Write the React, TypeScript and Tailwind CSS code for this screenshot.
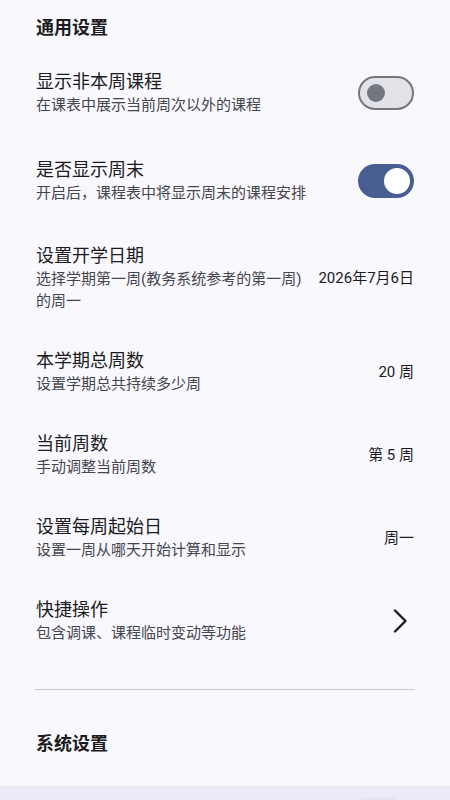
const font = "font-['Roboto','Noto_Sans_CJK_SC',sans-serif]"

function Toggle({ on }: { on: boolean }) {
  if (on) {
    return (
      <div className="flex h-[34px] w-[56px] shrink-0 items-center justify-end rounded-full bg-[#485d92] pr-[4px]">
        <div className="h-[26px] w-[26px] rounded-full bg-white" />
      </div>
    )
  }
  return (
    <div className="flex h-[34px] w-[56px] shrink-0 items-center rounded-full border-2 border-[#74777f] bg-[#e2e2e9] pl-[7px]">
      <div className="h-[18px] w-[18px] rounded-full bg-[#74777f]" />
    </div>
  )
}

function Chevron() {
  return (
    <svg width="16" height="24" viewBox="0 0 16 24" fill="none" className="mr-[6px] shrink-0">
      <path d="M3 1.5 L13.5 12 L3 22.5" stroke="#1b1b21" strokeWidth="2.4" strokeLinecap="round" strokeLinejoin="round" />
    </svg>
  )
}

type Row = {
  title: string
  sub: string
  right: React.ReactNode
  tall?: boolean
}

function SettingRow({ title, sub, right, tall }: Row) {
  return (
    <div className={`flex items-center gap-4 px-9 ${tall ? "pt-5 pb-[22px]" : "pt-[18px] pb-[19px]"}`}>
      <div className="flex min-w-0 flex-1 flex-col">
        <div className="text-[18px] leading-6 text-[#1b1b21]">{title}</div>
        <div className="text-[15px] leading-[22px] text-[#44464f]">{sub}</div>
      </div>
      {right}
    </div>
  )
}

function Value({ children }: { children: React.ReactNode }) {
  return <div className="shrink-0 text-[15px] leading-[22px] text-[#1b1b21]">{children}</div>
}

export default function App() {
  const rows: Row[] = [
    { title: "显示非本周课程", sub: "在课表中展示当前周次以外的课程", right: <Toggle on={false} />, tall: true },
    { title: "是否显示周末", sub: "开启后，课程表中将显示周末的课程安排", right: <Toggle on />, tall: true },
    { title: "设置开学日期", sub: "选择学期第一周(教务系统参考的第一周)的周一", right: <Value>2026年7月6日</Value> },
    { title: "本学期总周数", sub: "设置学期总共持续多少周", right: <Value>20 周</Value> },
    { title: "当前周数", sub: "手动调整当前周数", right: <Value>第 5 周</Value> },
    { title: "设置每周起始日", sub: "设置一周从哪天开始计算和显示", right: <Value>周一</Value> },
    { title: "快捷操作", sub: "包含调课、课程临时变动等功能", right: <Chevron /> },
  ]

  return (
    <div className={`flex h-[800px] w-[450px] flex-col overflow-hidden bg-[#f9f8fd] ${font}`}>
      <div className="px-9 pt-4 pb-[10px] text-[18px] font-bold leading-6 text-[#1b1b21]">通用设置</div>

      {rows.map((r) => (
        <SettingRow key={r.title} {...r} />
      ))}

      <div className="mx-[35px] mt-[26px] h-px bg-[#cbcad1]" />

      <div className="px-9 pt-[42px] text-[18px] font-bold leading-6 text-[#1b1b21]">系统设置</div>

      {/* bottom sheet edge */}
      <div className="mt-auto flex h-[14px] justify-end border-t border-[#e6e5f0] bg-[#ebeaf6] pr-[53px]">
        <div className="mt-[11px] h-[3px] w-[37px] rounded-t bg-[#e4e3f1]" />
      </div>
    </div>
  )
}
